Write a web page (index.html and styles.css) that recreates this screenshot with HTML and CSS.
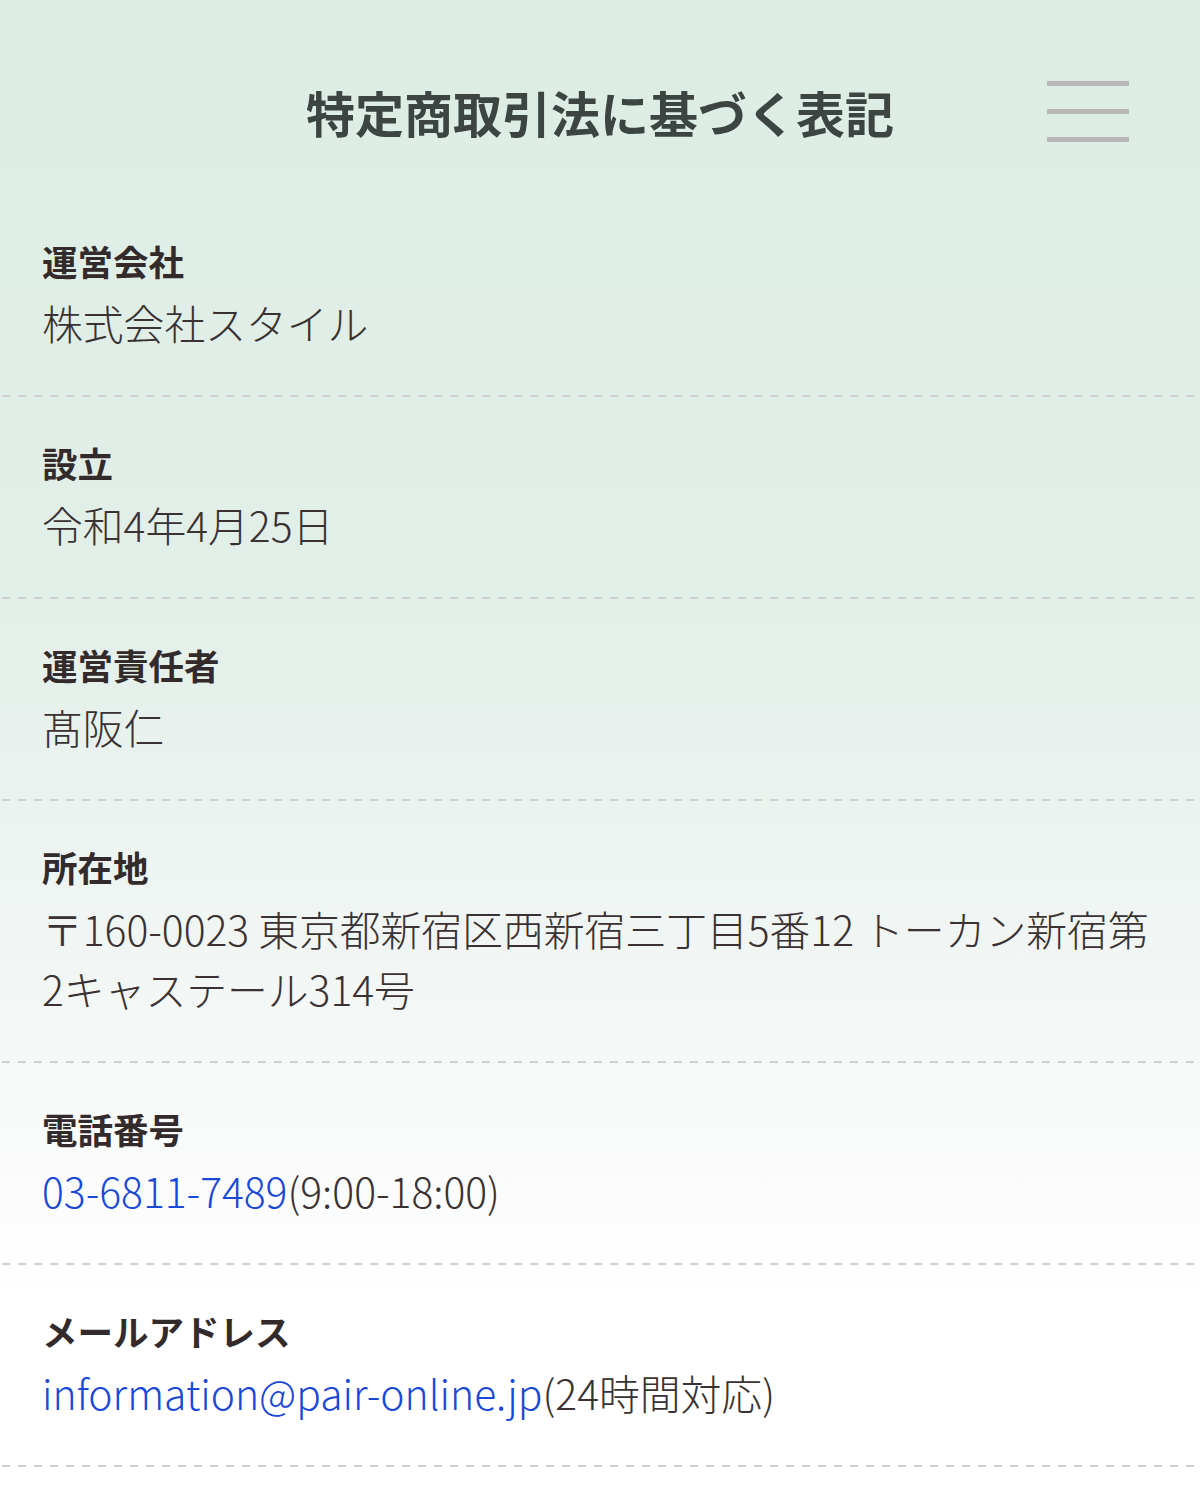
FILE: index.html
```html
<!DOCTYPE html>
<html lang="ja">
<head>
<meta charset="utf-8">
<title>特定商取引法に基づく表記</title>
<link rel="stylesheet" href="styles.css">
</head>
<body>
<div class="page">
  <header class="header">
    <h1 class="title">特定商取引法に基づく表記</h1>
    <button class="menu" aria-label="menu">
      <span class="bar"></span><span class="bar"></span><span class="bar"></span>
    </button>
  </header>
  <dl class="list">
    <div class="row first">
      <dt class="label">運営会社</dt>
      <dd class="value">株式会社スタイル</dd>
    </div>
    <div class="row">
      <dt class="label">設立</dt>
      <dd class="value">令和4年4月25日</dd>
    </div>
    <div class="row">
      <dt class="label">運営責任者</dt>
      <dd class="value">髙阪仁</dd>
    </div>
    <div class="row">
      <dt class="label">所在地</dt>
      <dd class="value">〒160-0023 東京都新宿区西新宿三丁目5番12 トーカン新宿第2キャステール314号</dd>
    </div>
    <div class="row">
      <dt class="label">電話番号</dt>
      <dd class="value"><a class="link" href="#">03-6811-7489</a>(9:00-18:00)</dd>
    </div>
    <div class="row last">
      <dt class="label">メールアドレス</dt>
      <dd class="value"><a class="link" href="#">information@pair-online.jp</a>(24時間対応)</dd>
    </div>
  </dl>
</div>
</body>
</html>
```
FILE: styles.css
```css
html, body {
  margin: 0;
  padding: 0;
}
body {
  width: 1200px;
  min-height: 1485px;
  background: linear-gradient(180deg, #dcede4 0px, #e3efe9 600px, #f3f7f5 1000px, #ffffff 1300px, #ffffff 1485px);
  font-family: "Noto Sans CJK JP", "Noto Sans", sans-serif;
  color: #3a3232;
}
.header {
  position: relative;
  height: 193px;
  display: flex;
  align-items: flex-start;
  justify-content: center;
  padding-top: 83px;
  box-sizing: border-box;
}
.title {
  margin: 0;
  font-size: 49px;
  font-weight: 700;
  color: #3d4543;
  line-height: 58px;
}
.menu {
  position: absolute;
  left: 1047px;
  top: 81px;
  width: 82px;
  height: 61px;
  padding: 0;
  border: 0;
  background: transparent;
  display: flex;
  flex-direction: column;
  justify-content: space-between;
}
.bar {
  display: block;
  height: 5px;
  width: 100%;
  background: #b8b8b8;
}
.list {
  margin: 0;
}
.row {
  padding: 42px 42px 42px 42px;
  background-image: linear-gradient(90deg, #d0d0d0 0 8px, transparent 8px 16px);
  background-size: 16px 2px;
  background-repeat: repeat-x;
  background-position: 2px 0;
}
.row.first {
  background-image: none;
}
.row.last {
  position: relative;
}
.row.last::after {
  content: "";
  position: absolute;
  left: 0;
  right: 0;
  bottom: -2px;
  height: 2px;
  background-image: linear-gradient(90deg, #d0d0d0 0 8px, transparent 8px 16px);
  background-size: 16px 2px;
  background-position: 2px 0;
}
.label {
  margin: 0;
  font-size: 35.5px;
  line-height: 52px;
  font-weight: 700;
  color: #332b2b;
}
.value {
  margin: 6px 0 0;
  font-size: 40.8px;
  line-height: 60px;
  font-weight: 300;
  color: #3a3232;
}
.link {
  color: #1a48d6;
  text-decoration: none;
}
```
